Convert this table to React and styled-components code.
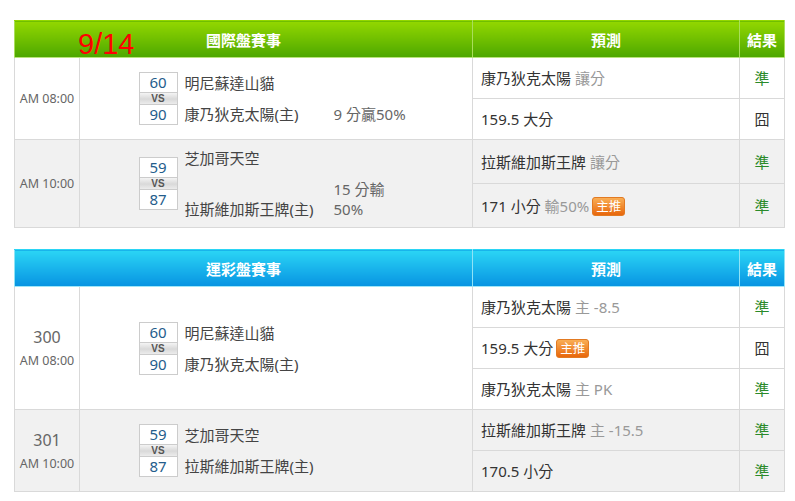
import React from 'react'
import styled, { createGlobalStyle } from 'styled-components'

const GlobalStyle = createGlobalStyle`
  body {
    margin: 0;
    background: #ffffff;
    font-family: 'Noto Sans', 'Noto Sans CJK TC', sans-serif;
    color: #333333;
  }
`

const Page = styled.div`
  padding: 20px 0 0 14px;
  display: flex;
  flex-direction: column;
  gap: 21px;
`
const TableWrap = styled.div`
  position: relative;
  width: 770px;
`
const Table = styled.table`
  width: 770px;
  border-collapse: collapse;
  table-layout: fixed;
  font-size: 15px;
`
const HeadCell = styled.th`
  height: 36px;
  padding: 0;
  color: #ffffff;
  font-weight: bold;
  font-size: 15px;
  text-align: center;
  background: ${(p) =>
    p.$tone === 'blue'
      ? 'linear-gradient(#2bd5f5, #0793e2)'
      : 'linear-gradient(#93d700, #4ca700)'};
  border: 1px solid ${(p) => (p.$tone === 'blue' ? '#8fe3f7' : '#a9de5a')};
  border-top-color: ${(p) => (p.$tone === 'blue' ? '#2bd5f5' : '#93d700')};
  border-bottom-color: ${(p) => (p.$tone === 'blue' ? '#9fe6f8' : '#b8e47a')};
`
const Cell = styled.td`
  border: 1px solid #d9d9d9;
  background: ${(p) => (p.$alt ? '#f1f1f1' : '#ffffff')};
  padding: 0;
  vertical-align: middle;
`
const TimeCell = styled(Cell)`
  text-align: center;
  color: #666666;
`
const MatchCell = styled(Cell)`
  padding: 8px 0;
`
const GameNo = styled.div`
  font-size: 16px;
  line-height: 22px;
  margin-bottom: 4px;
`
const Clock = styled.div`
  font-size: 12.5px;
  line-height: 18px;
`
const PickCell = styled(Cell)`
  padding: 10px 8px;
  line-height: 20px;
  color: #333333;
`
const Muted = styled.span`
  color: #999999;
`
const Badge = styled.span`
  display: inline-block;
  margin-left: 3px;
  padding: 0 3px;
  height: 17px;
  line-height: 17px;
  font-size: 12.5px;
  color: #ffffff;
  background: linear-gradient(#f9ae55, #e8670c);
  border: 1px solid #e27a22;
  border-radius: 3px;
  vertical-align: 1px;
`
const ResultCell = styled(Cell)`
  text-align: center;
  line-height: 20px;
  color: ${(p) => (p.$hit ? '#2a8a2a' : '#333333')};
`
const DateMark = styled.div`
  position: absolute;
  left: 64px;
  top: 10px;
  font-family: 'Liberation Sans', sans-serif;
  font-size: 29px;
  line-height: 29px;
  color: #ff0000;
  pointer-events: none;
`

const Matchup = styled.div`
  display: flex;
  justify-content: center;
  align-items: center;
  gap: 7px;
  padding-right: 5px;
`
const ScoreCol = styled.div`
  width: 39px;
  display: flex;
  flex-direction: column;
  border: 1px solid #cccccc;
  box-sizing: border-box;
`
const Score = styled.div`
  height: 19px;
  line-height: 19px;
  text-align: center;
  font-size: 15px;
  color: #245d8c;
  background: #ffffff;
`
const Vs = styled.div`
  height: 11px;
  line-height: 11px;
  text-align: center;
  font-family: 'Liberation Sans', sans-serif;
  font-size: 10px;
  font-weight: bold;
  color: #555555;
  background: linear-gradient(#f4f4f4, #d9d9d9 55%, #ececec);
  border-top: 1px solid #cccccc;
  border-bottom: 1px solid #cccccc;
`
const Names = styled.div`
  display: grid;
  grid-template-columns: 149px 75px;
  row-gap: 11px;
  line-height: 20px;
  color: #444444;
`
const TeamTop = styled.div`
  grid-column: 1 / span 2;
`
const TeamBottom = styled.div`
  align-self: end;
`
const Info = styled.div`
  align-self: end;
  color: #666666;
`

const intl = [
  {
    time: 'AM 08:00',
    s1: 60,
    s2: 90,
    t1: '明尼蘇達山貓',
    t2: '康乃狄克太陽(主)',
    info: '9 分贏50%',
    picks: [
      { main: '康乃狄克太陽', sub: '讓分', hit: true },
      { main: '159.5 大分', hit: false },
    ],
  },
  {
    time: 'AM 10:00',
    s1: 59,
    s2: 87,
    t1: '芝加哥天空',
    t2: '拉斯維加斯王牌(主)',
    info: '15 分輸 50%',
    picks: [
      { main: '拉斯維加斯王牌', sub: '讓分', hit: true },
      { main: '171 小分', sub: '輸50%', badge: true, hit: true },
    ],
  },
]

const lottery = [
  {
    no: '300',
    time: 'AM 08:00',
    s1: 60,
    s2: 90,
    t1: '明尼蘇達山貓',
    t2: '康乃狄克太陽(主)',
    picks: [
      { main: '康乃狄克太陽', sub: '主 -8.5', hit: true },
      { main: '159.5 大分', badge: true, hit: false },
      { main: '康乃狄克太陽', sub: '主 PK', hit: true },
    ],
  },
  {
    no: '301',
    time: 'AM 10:00',
    s1: 59,
    s2: 87,
    t1: '芝加哥天空',
    t2: '拉斯維加斯王牌(主)',
    picks: [
      { main: '拉斯維加斯王牌', sub: '主 -15.5', hit: true },
      { main: '170.5 小分', hit: true },
    ],
  },
]

const GameRows = ({ game, alt }) =>
  game.picks.map((pick, i) => (
    <tr key={i}>
      {i === 0 && (
        <>
          <TimeCell $alt={alt} rowSpan={game.picks.length}>
            {game.no && <GameNo>{game.no}</GameNo>}
            <Clock>{game.time}</Clock>
          </TimeCell>
          <MatchCell $alt={alt} rowSpan={game.picks.length}>
            <Matchup>
              <ScoreCol>
                <Score>{game.s1}</Score>
                <Vs>VS</Vs>
                <Score>{game.s2}</Score>
              </ScoreCol>
              <Names>
                <TeamTop>{game.t1}</TeamTop>
                <TeamBottom>{game.t2}</TeamBottom>
                <Info>{game.info}</Info>
              </Names>
            </Matchup>
          </MatchCell>
        </>
      )}
      <PickCell $alt={alt}>
        {pick.main}
        {pick.sub && <Muted> {pick.sub}</Muted>}
        {pick.badge && <Badge>主推</Badge>}
      </PickCell>
      <ResultCell $alt={alt} $hit={pick.hit}>
        {pick.hit ? '準' : '囧'}
      </ResultCell>
    </tr>
  ))

const GameTable = ({ title, tone, games, date }) => (
  <TableWrap>
    <Table>
      <colgroup>
        <col style={{ width: 65 }} />
        <col style={{ width: 393 }} />
        <col style={{ width: 267 }} />
        <col style={{ width: 45 }} />
      </colgroup>
      <thead>
        <tr>
          <HeadCell $tone={tone} colSpan={2}>
            {title}
          </HeadCell>
          <HeadCell $tone={tone}>預測</HeadCell>
          <HeadCell $tone={tone}>結果</HeadCell>
        </tr>
      </thead>
      <tbody>
        {games.map((g, i) => (
          <GameRows key={i} game={g} alt={i % 2 === 1} />
        ))}
      </tbody>
    </Table>
    {date && <DateMark>{date}</DateMark>}
  </TableWrap>
)

export default function App() {
  return (
    <>
      <GlobalStyle />
      <Page>
        <GameTable title="國際盤賽事" tone="green" games={intl} date="9/14" />
        <GameTable title="運彩盤賽事" tone="blue" games={lottery} />
      </Page>
    </>
  )
}
